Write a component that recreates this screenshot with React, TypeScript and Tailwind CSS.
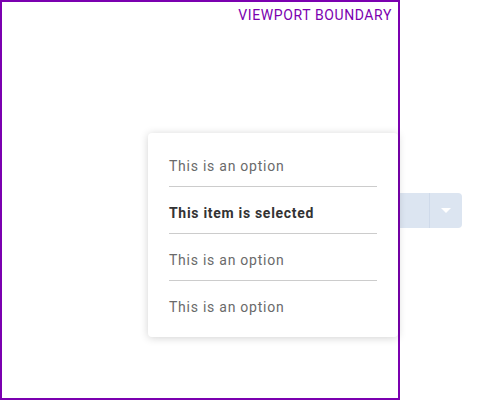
export default function App() {
  const options = [
    { label: "This is an option", selected: false },
    { label: "This item is selected", selected: true },
    { label: "This is an option", selected: false },
    { label: "This is an option", selected: false },
  ];
  return (
    <div className="relative w-[500px] h-[400px] bg-white font-['Roboto',sans-serif] overflow-hidden">
      <div className="absolute left-[290px] top-[193px] w-[172px] h-[35px] rounded-[4px] bg-[#dce5f1] flex">
        <div className="flex-1" />
        <div className="w-[33px] border-l border-[#cfdaea] flex items-center justify-center">
          <svg width="10" height="5" viewBox="0 0 10 5">
            <path d="M0 0 L10 0 L5 5 Z" fill="#ffffff" />
          </svg>
        </div>
      </div>
      <div className="absolute left-0 top-0 w-[400px] h-[400px] border-2 border-[#7b00b0] flex justify-end items-start">
        <span className="mt-[3px] mr-[6px] text-[14px] leading-5 tracking-[0.6px] text-[#7b00b0] uppercase">
          Viewport Boundary
        </span>
      </div>
      <div className="absolute left-[148px] top-[133px] w-[250px] rounded-[4px] bg-white shadow-[0_1px_8px_rgba(0,0,0,0.18)] pt-[7px] pb-[10px] px-[21px]">
        {options.map((o, i) => (
          <div
            key={i}
            className={`pt-[16px] pb-[10px] text-[14px] leading-5 ${
              i < options.length - 1 ? "border-b border-[#cccccc]" : ""
            } ${o.selected ? "font-bold text-[#333333] tracking-[0.7px]" : "text-[#6a6a6a] tracking-[0.75px]"}`}
          >
            {o.label}
          </div>
        ))}
      </div>
    </div>
  );
}
